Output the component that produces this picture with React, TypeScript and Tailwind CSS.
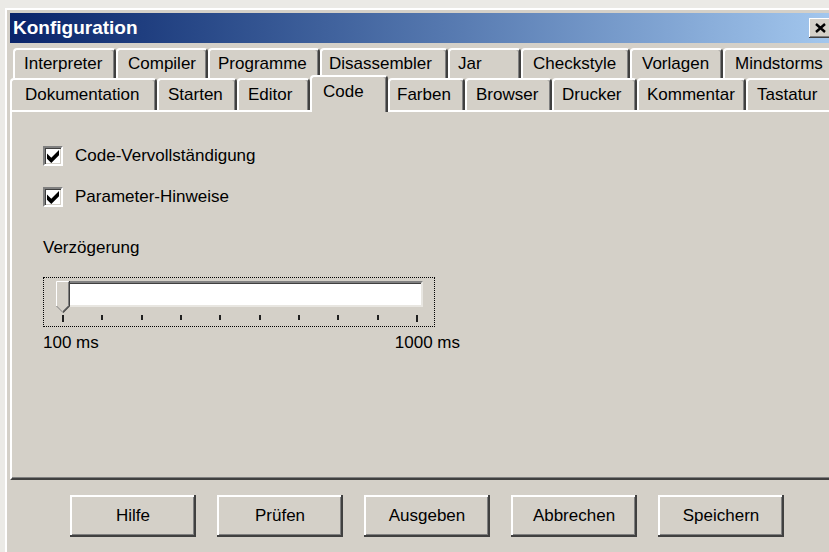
import clsx from 'clsx';

type Tab = { label: string; width: string; pad: string; active?: boolean };

// back row of the tab strip
const backRow: Tab[] = [
  { label: 'Interpreter', width: 'w-[103px]', pad: 'pl-[9px]' },
  { label: 'Compiler', width: 'w-[92px]', pad: 'pl-[10px]' },
  { label: 'Programme', width: 'w-[112px]', pad: 'pl-[8px]' },
  { label: 'Disassembler', width: 'w-[128px]', pad: 'pl-[7px]' },
  { label: 'Jar', width: 'w-[73px]', pad: 'pl-[8px]' },
  { label: 'Checkstyle', width: 'w-[109px]', pad: 'pl-[10px]' },
  { label: 'Vorlagen', width: 'w-[93px]', pad: 'pl-[10px]' },
  { label: 'Mindstorms', width: 'w-[118px]', pad: 'pl-[10px]' },
];

// front row, holds the selected tab
const frontRow: Tab[] = [
  { label: 'Dokumentation', width: 'w-[147px]', pad: 'pl-[13px]' },
  { label: 'Starten', width: 'w-[80px]', pad: 'pl-[9px]' },
  { label: 'Editor', width: 'w-[73px]', pad: 'pl-[9px]' },
  { label: 'Code', width: 'w-[78px]', pad: 'pl-[11px]', active: true },
  { label: 'Farben', width: 'w-[77px]', pad: 'pl-[7px]' },
  { label: 'Browser', width: 'w-[87px]', pad: 'pl-[9px]' },
  { label: 'Drucker', width: 'w-[85px]', pad: 'pl-[8px]' },
  { label: 'Kommentar', width: 'w-[109px]', pad: 'pl-[8px]' },
  { label: 'Tastatur', width: 'w-[100px]', pad: 'pl-[9px]' },
];

const buttons = ['Hilfe', 'Prüfen', 'Ausgeben', 'Abbrechen', 'Speichern'];

function TabItem({ tab }: { tab: Tab }) {
  return (
    <div
      className={clsx(
        'flex shrink-0 items-center rounded-t-[4px] border-t-2 border-r-2 border-l-2 border-t-white border-r-[#404040] border-l-white bg-[#d4d0c8] leading-[20px] shadow-[inset_-1px_0_0_#808080]',
        tab.width,
        tab.pad,
        tab.active ? 'relative z-10 -mt-[3px] h-[37px] pb-[5px]' : 'h-full'
      )}
    >
      {tab.label}
    </div>
  );
}

function CheckBox({ label }: { label: string }) {
  return (
    <div className="flex h-[20px] items-center gap-[12px]">
      <div className="flex h-[20px] w-[20px] items-center justify-center border-2 border-t-[#808080] border-r-white border-b-white border-l-[#808080] bg-white shadow-[inset_1px_1px_0_#404040,inset_-1px_-1px_0_#d4d0c8]">
        <svg width="12" height="13" viewBox="0 0 7 7.5">
          <polygon points="0,2 2.5,4.5 7,0 7,3 2.5,7.5 0,5" fill="#000" />
        </svg>
      </div>
      <span className="leading-[20px]">{label}</span>
    </div>
  );
}

function DelaySlider() {
  return (
    <div>
      <div className="w-[392px] border border-dotted border-black pt-[3px] pb-[4px] pl-[12px]">
        <div className="relative w-[367px]">
          <div className="ml-[1px] h-[26px] w-[366px] border-2 border-t-[#808080] border-r-[#e8e6e1] border-b-[#e8e6e1] border-l-[#808080] bg-white shadow-[inset_1px_1px_0_#404040,inset_-1px_-1px_0_#ffffff]" />
          <svg className="absolute top-0 left-0" width="14" height="32" viewBox="0 0 14 32">
            <polygon points="0,0 14,0 14,25 7,31 0,25" fill="#d4d0c8" />
            <polyline points="0.5,25 0.5,0.5 13,0.5" fill="none" stroke="#ffffff" strokeWidth="1" />
            <polyline points="13.5,0 13.5,25 7,31.5" fill="none" stroke="#404040" strokeWidth="1.2" />
            <polyline points="12.5,1 12.5,24.5 7,30" fill="none" stroke="#808080" strokeWidth="1" />
            <line x1="0.5" y1="25" x2="7" y2="31.5" stroke="#808080" strokeWidth="1" />
          </svg>
          <div className="mt-[8px] ml-[6px] flex h-[7px] w-[356px] items-start justify-between">
            {Array.from({ length: 10 }).map((_, i) => (
              <div
                key={i}
                className={clsx('w-[2px] bg-[#202020]', i === 0 || i === 9 ? 'h-[7px]' : 'h-[5px]')}
              />
            ))}
          </div>
        </div>
      </div>
      <div className="mt-[6px] flex w-[417px] justify-between leading-[20px]">
        <span>100 ms</span>
        <span>1000 ms</span>
      </div>
    </div>
  );
}

export default function App() {
  return (
    <div className="h-[552px] w-[829px] overflow-hidden bg-[#ebeae6] pt-[8px] pl-[5px] font-['Liberation_Sans',Arial,sans-serif] text-[17px] text-black">
      <div className="h-[600px] w-[840px] border-t-2 border-l-2 border-t-white border-l-white bg-[#d4d0c8] pt-[3px] pl-[3px]">
        {/* caption bar */}
        <div className="flex h-[30px] items-center justify-between bg-linear-to-r from-[#0a246a] to-[#a6caf0] pr-[8px] pl-[3px]">
          <span className="text-[19px] leading-[30px] font-bold text-white">Konfiguration</span>
          <div className="mr-[6px] flex h-[20px] w-[22px] items-center justify-center bg-[#d4d0c8] shadow-[inset_-1px_-1px_0_#404040,inset_1px_1px_0_#ffffff,inset_-2px_-2px_0_#808080]">
            <svg width="11" height="10" viewBox="0 0 11 10">
              <path d="M1 1 L10 9 M10 1 L1 9" stroke="#000" strokeWidth="2.4" />
            </svg>
          </div>
        </div>

        {/* tab strip */}
        <div className="mt-[5px] flex h-[30px] pl-[3px]">
          {backRow.map((t) => (
            <TabItem key={t.label} tab={t} />
          ))}
        </div>
        <div className="flex h-[32px]">
          {frontRow.map((t) => (
            <TabItem key={t.label} tab={t} />
          ))}
        </div>

        {/* page: Code */}
        <div className="h-[370px] border-t-2 border-b-2 border-l-2 border-t-white border-b-[#404040] border-l-white pt-[34px] pl-[31px] shadow-[inset_0_-1px_0_#808080]">
          <CheckBox label="Code-Vervollständigung" />
          <div className="mt-[21px]">
            <CheckBox label="Parameter-Hinweise" />
          </div>
          <div className="mt-[31px] leading-[20px]">Verzögerung</div>
          <div className="mt-[19px]">
            <DelaySlider />
          </div>
        </div>

        {/* dialog buttons */}
        <div className="mt-[15px] flex gap-[21px] pl-[60px]">
          {buttons.map((b) => (
            <button
              key={b}
              className="flex h-[42px] w-[126px] items-center justify-center bg-[#d4d0c8] leading-[20px] shadow-[inset_-2px_-2px_0_#404040,inset_2px_2px_0_#ffffff,inset_-3px_-3px_0_#808080]"
            >
              {b}
            </button>
          ))}
        </div>
      </div>
    </div>
  );
}
